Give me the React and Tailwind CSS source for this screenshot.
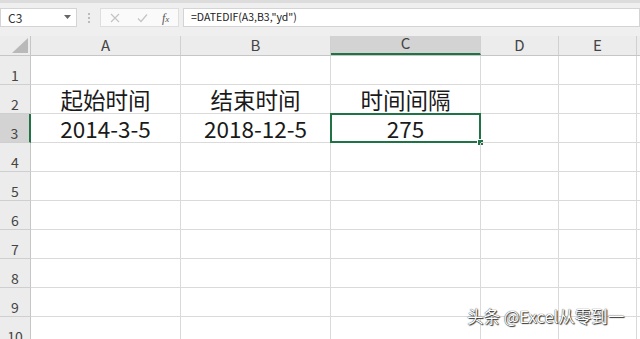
import React from "react";

const cols = [
  { key: "A", w: "w-[150px]" },
  { key: "B", w: "w-[150px]" },
  { key: "C", w: "w-[150px]" },
  { key: "D", w: "w-[78px]" },
  { key: "E", w: "w-[78px]" },
];

const data = {
  2: { A: "起始时间", B: "结束时间", C: "时间间隔" },
  3: { A: "2014-3-5", B: "2018-12-5", C: "275" },
};

const rows = [1, 2, 3, 4, 5, 6, 7, 8, 9, 10];

const FormulaBar = () => (
  <div className="h-[36px] bg-[#efefef] border-t-[3px] border-[#dcdcdc] flex items-start pt-[5px] text-[#333]">
    <div className="w-[77px] h-[19px] bg-white border border-[#d4d4d4] flex items-center justify-between pl-[7px] pr-[5px]">
      <span className="text-[12px] leading-none">C3</span>
      <svg width="7" height="5" viewBox="0 0 7 5">
        <path d="M0 0 L7 0 L3.5 4 Z" fill="#666" />
      </svg>
    </div>
    <div className="w-[23px] h-[19px] flex flex-col items-center justify-center gap-[2px]">
      <span className="w-[2px] h-[2px] bg-[#bbb]" />
      <span className="w-[2px] h-[2px] bg-[#bbb]" />
      <span className="w-[2px] h-[2px] bg-[#bbb]" />
    </div>
    <div className="w-[79px] h-[19px] bg-[#fafafa] border border-[#dedede] flex items-center pl-[9px]">
      <svg width="10" height="10" viewBox="0 0 10 10" className="mr-[17px]">
        <path d="M1 1 L9 9 M9 1 L1 9" stroke="#c4c4c4" strokeWidth="1.2" />
      </svg>
      <svg width="11" height="10" viewBox="0 0 11 10" className="mr-[14px]">
        <path d="M1 5.5 L4 8.5 L10 1.5" stroke="#c4c4c4" strokeWidth="1.2" fill="none" />
      </svg>
      <span className="text-[12px] leading-none italic text-[#555] font-['Liberation_Serif',serif]">
        f<span className="text-[9px]">x</span>
      </span>
    </div>
    <div className="w-[4px]" />
    <div className="flex-1 h-[19px] bg-white border border-[#d4d4d4] flex items-center pl-[7px]">
      <span className="text-[10.5px] leading-none text-[#222]">=DATEDIF(A3,B3,"yd")</span>
    </div>
  </div>
);

const ColumnHeader = () => (
  <div className="h-[20px] flex bg-[#ececec] border-b border-[#c6c6c6]">
    <div className="w-[31px] h-full border-r border-[#c6c6c6] relative shrink-0">
      <svg width="16" height="15" viewBox="0 0 16 15" className="absolute right-[2px] bottom-[2px]">
        <path d="M16 0 L16 15 L0 15 Z" fill="#b9b9b9" />
      </svg>
    </div>
    {cols.map((c) => (
      <div
        key={c.key}
        className={`${c.w} shrink-0 h-full flex items-end justify-center pb-[1px] border-r border-[#d0d0d0] text-[15px] leading-none text-[#444] ${
          c.key === "C" ? "bg-[#d3d3d3] border-b-2 border-b-[#217346]" : ""
        }`}
      >
        <span className="pb-[2px]">{c.key}</span>
      </div>
    ))}
    <div className="flex-1" />
  </div>
);

const Row = ({ n }) => {
  const active = n === 3;
  return (
    <div className="h-[29px] flex shrink-0">
      <div
        className={`w-[31px] shrink-0 h-full flex items-end justify-center pb-[2px] text-[14px] leading-none text-[#444] border-b border-[#cfcfcf] ${
          active
            ? "bg-[#d3d3d3] border-r-2 border-r-[#217346]"
            : "bg-[#ececec] border-r border-r-[#c6c6c6]"
        }`}
      >
        {n}
      </div>
      {cols.map((c) => {
        const text = data[n]?.[c.key];
        const sel = active && c.key === "C";
        return (
          <div
            key={c.key}
            className={`${c.w} shrink-0 h-full border-r border-b border-[#dadada] flex items-end justify-center pb-[2px] text-[22.5px] leading-none text-[#1a1a1a] relative`}
          >
            {text && <span className="pb-[1px]">{text}</span>}
            {sel && (
              <>
                <div className="absolute left-[-1px] top-[-1px] right-[-1px] bottom-[-1px] border-2 border-[#217346]" />
                <div className="absolute right-[-4px] bottom-[-4px] w-[7px] h-[7px] bg-[#217346] border border-white" />
              </>
            )}
          </div>
        );
      })}
      <div className="flex-1 border-b border-[#dadada]" />
    </div>
  );
};

export default function App() {
  return (
    <div className="w-[640px] h-[339px] overflow-hidden bg-white relative font-['Noto_Sans_CJK_SC','Liberation_Sans',sans-serif]">
      <FormulaBar />
      <ColumnHeader />
      {rows.map((n) => (
        <Row key={n} n={n} />
      ))}
      <div className="absolute left-[467px] top-[308px] text-[16.5px] leading-none text-white [text-shadow:0_0_1px_#000,1px_1px_1px_#333]">
        头条 @Excel从零到一
      </div>
    </div>
  );
}
